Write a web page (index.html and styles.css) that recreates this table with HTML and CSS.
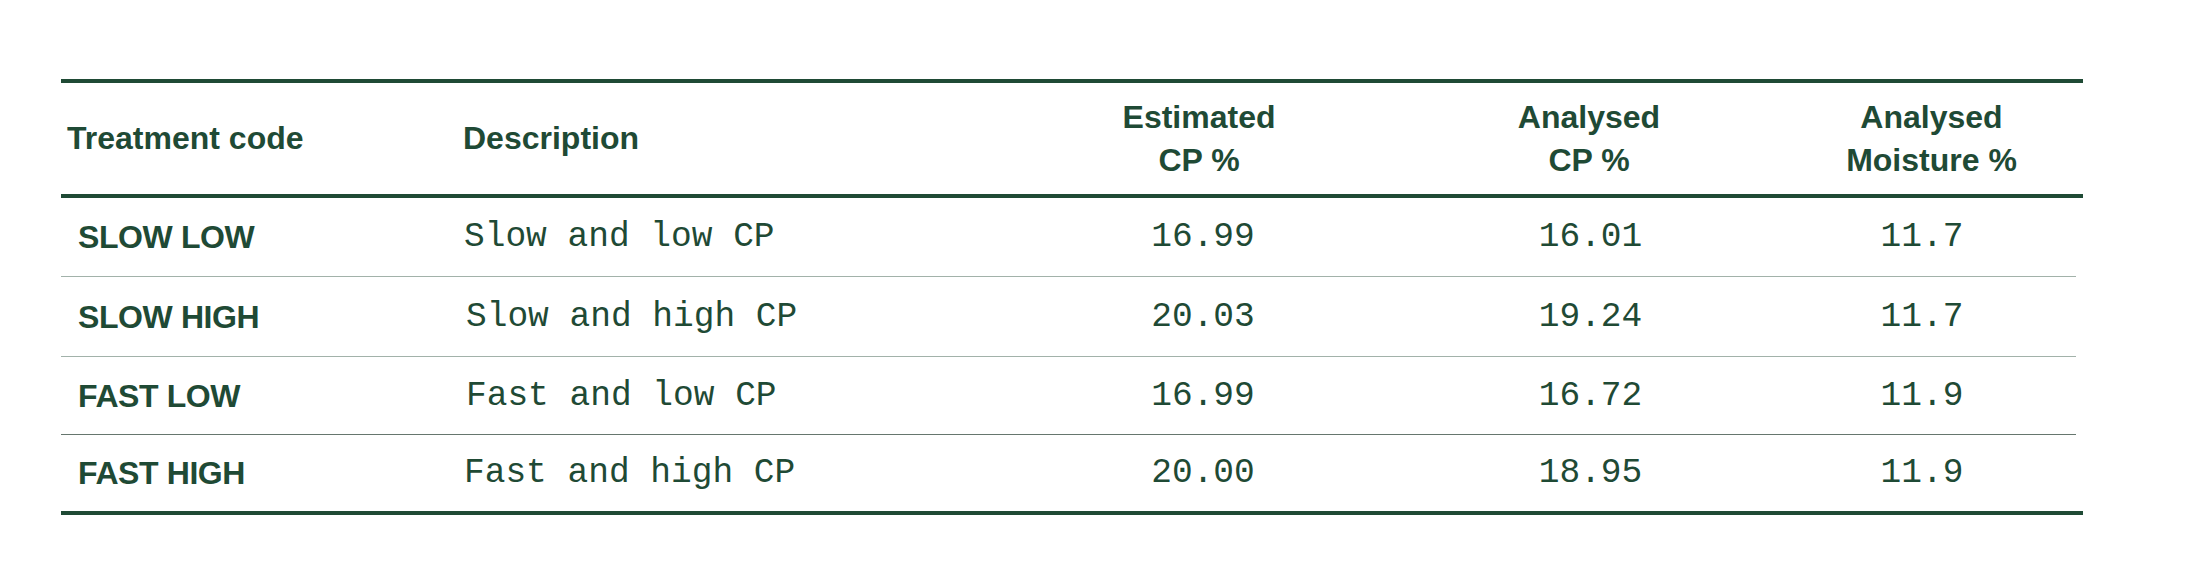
FILE: index.html
```html
<!DOCTYPE html>
<html lang="en">
<head>
<meta charset="utf-8">
<title>Treatments</title>
<link rel="stylesheet" href="styles.css">
</head>
<body>
<div class="table">
  <div class="head">
    <div class="h h-code">Treatment code</div>
    <div class="h h-desc">Description</div>
    <div class="h h-num h-est">Estimated<br>CP %</div>
    <div class="h h-num h-cp">Analysed<br>CP %</div>
    <div class="h h-num">Analysed<br>Moisture %</div>
  </div>
  <div class="row light">
    <div class="code">SLOW LOW</div>
    <div class="desc">Slow and low CP</div>
    <div class="num">16.99</div>
    <div class="num">16.01</div>
    <div class="num">11.7</div>
  </div>
  <div class="row light tall">
    <div class="code">SLOW HIGH</div>
    <div class="desc shift">Slow and high CP</div>
    <div class="num">20.03</div>
    <div class="num">19.24</div>
    <div class="num">11.7</div>
  </div>
  <div class="row dark short">
    <div class="code">FAST LOW</div>
    <div class="desc shift">Fast and low CP</div>
    <div class="num">16.99</div>
    <div class="num">16.72</div>
    <div class="num">11.9</div>
  </div>
  <div class="row last">
    <div class="code">FAST HIGH</div>
    <div class="desc">Fast and high CP</div>
    <div class="num">20.00</div>
    <div class="num">18.95</div>
    <div class="num">11.9</div>
  </div>
</div>
</body>
</html>
```

FILE: styles.css
```css
html, body {
  margin: 0;
  padding: 0;
  background: #ffffff;
}

body {
  color: #1f4a35;
  font-family: "Liberation Sans", Arial, sans-serif;
}

.table {
  margin: 79px 0 0 61px;
  width: 2022px;
  border-top: 4px solid #1f4a35;
  border-bottom: 4px solid #1f4a35;
}

.head,
.row {
  display: grid;
  grid-template-columns: 396px 548px 396px 379px 1fr;
  align-items: center;
}

.head {
  height: 111px;
  border-bottom: 4px solid #1f4a35;
}

.h {
  font-weight: 700;
  font-size: 32px;
  line-height: 43px;
}

.h-code {
  padding-left: 6px;
}

.h-desc {
  padding-left: 6px;
}

.h-num {
  text-align: center;
}

.h-est {
  padding-right: 8px;
}

.h-cp {
  padding-right: 3px;
}

.row {
  height: 78px;
  margin-right: 7px;
}

.row.tall {
  height: 79px;
}

.row.short {
  height: 77px;
}

.row.light {
  border-bottom: 1px solid #a2b2aa;
}

.row.dark {
  border-bottom: 1px solid #66766e;
}

.row.last {
  height: 76px;
}

.code {
  padding-left: 17px;
  font-weight: 700;
  font-size: 32px;
  letter-spacing: -0.4px;
  line-height: 40px;
}

.desc {
  padding-left: 7px;
  font-family: "Liberation Mono", "Courier New", monospace;
  font-size: 34.5px;
  line-height: 40px;
  white-space: pre;
}

.desc.shift {
  padding-left: 9px;
}

.num {
  text-align: center;
  font-family: "Liberation Mono", "Courier New", monospace;
  font-size: 34.5px;
  line-height: 40px;
}

.num:last-child {
  padding-right: 12px;
}
```
